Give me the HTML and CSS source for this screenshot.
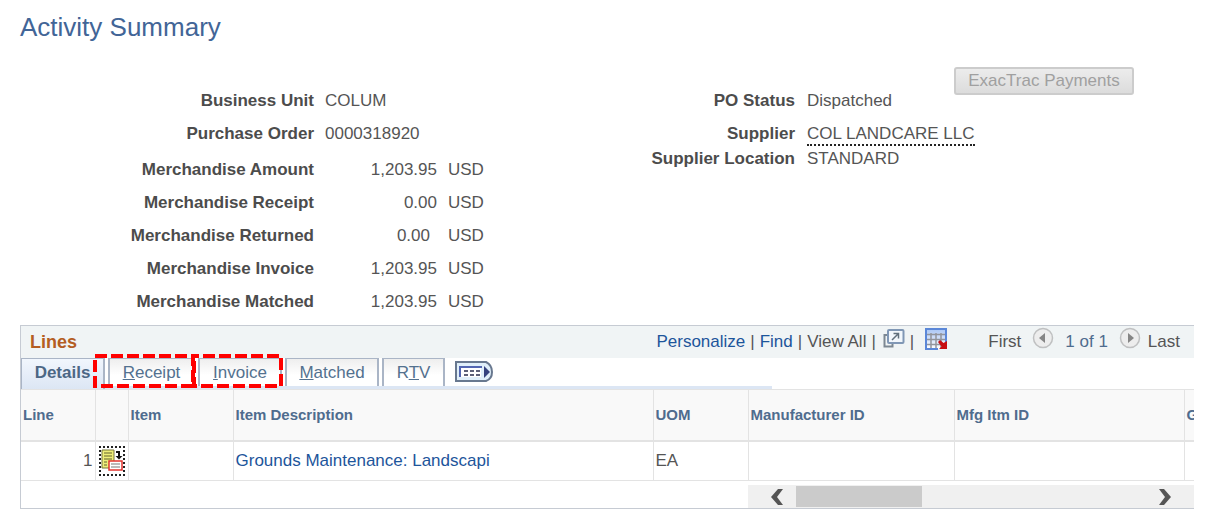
FILE: index.html
```html
<!DOCTYPE html>
<html lang="en-US">
<head>
	<meta charset="UTF-8">
	<meta name="viewport" content="width=device-width, initial-scale=1.0">
	<title>Activity Summary</title>
	<link rel="stylesheet" href="styles.css">
</head>
<body>
	<h1>Activity Summary</h1>

	<div class="summary">
		<dl class="order">
			<dt>Business Unit</dt><dd class="wide">COLUM</dd>
			<dt>Purchase Order</dt><dd class="wide">0000318920</dd>
		</dl>
		<dl class="order amounts">
			<dt>Merchandise Amount</dt><dd class="amount">1,203.95</dd><dd>USD</dd>
			<dt>Merchandise Receipt</dt><dd class="amount">0.00</dd><dd>USD</dd>
			<dt>Merchandise Returned</dt><dd class="amount returned">0.00</dd><dd>USD</dd>
			<dt>Merchandise Invoice</dt><dd class="amount">1,203.95</dd><dd>USD</dd>
			<dt>Merchandise Matched</dt><dd class="amount">1,203.95</dd><dd>USD</dd>
		</dl>
		<div class="supplier">
			<strong class="status">PO Status</strong>
			<div class="status-value">
				<span class="status">Dispatched</span>
				<button type="button" disabled>ExacTrac Payments</button>
			</div>
			<strong>Supplier</strong><span><abbr>COL LANDCARE LLC</abbr></span>
			<strong class="location">Supplier Location</strong><span class="location">STANDARD</span>
		</div>
	</div>

	<section class="lines">
		<header>
			<h2>Lines</h2>
			<div class="tools">
				<a href="#">Personalize</a><span>|</span>
				<a href="#">Find</a><span>|</span>
				<span>View All</span><span>|</span>
				<a href="#" class="popup" aria-label="Open in new window">
					<svg width="22" height="20" viewBox="0 0 22 20">
						<path d="M5 7H1.500V18.500H9.500V15" fill="none" stroke="#7c8792" stroke-width="2"/>
						<rect x="5" y="2" width="15.500" height="13" rx="1" fill="#f2f7fc" stroke="#8097b5" stroke-width="2"/>
						<path d="M9 12l6-6M10.500 5.500h5v5" fill="none" stroke="#61707d" stroke-width="1.500"/>
					</svg>
				</a><span>|</span>
				<a href="#" class="download" aria-label="Download to spreadsheet">
					<svg width="23" height="23" viewBox="0 0 23 23">
						<defs>
							<linearGradient id="sheet" x2="0" y2="1"><stop stop-color="#a9c6f5"/><stop offset="1" stop-color="#fff"/></linearGradient>
						</defs>
						<rect x="1" y="1" width="20" height="20" fill="url(#sheet)"/>
						<path d="M6 5V21M11 5V21M16 5V21M2 6.500H20M2 11.500H20M2 16.500H20" stroke="#92959c" stroke-width="1.500"/>
						<path d="M21 14V1H1V21H13" fill="none" stroke="#5b87d8" stroke-width="2"/>
						<path d="M13 14l2-2 3.500 3 3.500-2v8h-8l2.500-2.500z" fill="#c70d12"/>
					</svg>
				</a>
			</div>
			<div class="pager">
				<span>First</span>
				<button type="button" aria-label="Previous" disabled>
					<svg width="22" height="22" viewBox="0 0 22 22">
						<circle cx="11" cy="11" r="9.500" fill="#ededed" stroke="#bfc0c1" stroke-width="1.500"/>
						<path d="M13 6v10l-6-5z" fill="#858585"/>
					</svg>
				</button>
				<span class="count">1 of 1</span>
				<button type="button" aria-label="Next" disabled>
					<svg width="22" height="22" viewBox="0 0 22 22">
						<circle cx="11" cy="11" r="9.500" fill="#ededed" stroke="#bfc0c1" stroke-width="1.500"/>
						<path d="M9 6v10l6-5z" fill="#858585"/>
					</svg>
				</button>
				<span>Last</span>
			</div>
		</header>

		<nav class="tabs">
			<a href="#" class="details active">Details</a>
			<a href="#" class="receipt"><u>R</u>eceipt</a>
			<a href="#" class="invoice"><u>I</u>nvoice</a>
			<a href="#" class="matched"><u>M</u>atched</a>
			<a href="#" class="rtv">R<u>T</u>V</a>
			<button type="button" aria-label="Show all columns">
				<svg width="38" height="22" viewBox="0 0 38 22">
					<path d="M1 1H31Q37 4 37 11T31 20H1Z" fill="#e0effa" stroke="#68788f" stroke-width="2"/>
					<path d="M5 16V6H26V16" fill="#fff"/>
					<path d="M5 16V6M4 6H27" fill="none" stroke="#5266b2" stroke-width="2"/>
					<path d="M9 10h4m2 0h4m2 0h4M9 14h4m2 0h4m2 0h4" stroke="#5c6078" stroke-width="2"/>
					<path d="M29 5v12l6-6z" fill="#35427e"/>
				</svg>
			</button>
			<!-- callouts round Receipt and Invoice -->
			<svg class="marks" width="266" height="36" viewBox="0 0 266 36">
				<g fill="none" stroke="#f00" stroke-width="4">
					<rect x="74" y="3" width="98" height="30" stroke-dasharray="12 4"/>
					<rect x="173" y="3" width="87" height="30" stroke-dasharray="12 4" stroke-dashoffset="7"/>
				</g>
			</svg>
		</nav>

		<div class="scroller">
			<table>
				<colgroup>
					<col class="c-line"><col class="c-icon"><col class="c-item"><col class="c-desc">
					<col class="c-uom"><col class="c-maker"><col class="c-mfg"><col>
				</colgroup>
				<thead>
					<tr>
						<th>Line</th><th></th><th>Item</th><th>Item Description</th>
						<th>UOM</th><th>Manufacturer ID</th><th>Mfg Itm ID</th><th>G</th>
					</tr>
				</thead>
				<tbody>
					<tr>
						<td class="num">1</td>
						<td class="act">
							<a href="#" aria-label="Line details">
								<svg width="22" height="26" viewBox="0 0 22 26">
									<path d="M1 2h12v18H1z" fill="#eeee79" stroke="#77773c"/>
									<path d="M3 5h8M3 8h8M3 11h8M3 14h3M3 17h3" stroke="#62622f" stroke-width="1.200"/>
									<path d="M15 4h3v5" fill="none" stroke="#111" stroke-width="2"/>
									<path d="M14.500 8h7L18 11.500z" fill="#111"/>
									<rect x="8" y="13" width="13" height="9" fill="#fff" stroke="#e2342f" stroke-width="1.500"/>
									<path d="M10 16h9M10 19h9" stroke="#777" stroke-width="1.200"/>
								</svg>
							</a>
						</td>
						<td></td>
						<td><a href="#">Grounds Maintenance: Landscapi</a></td>
						<td>EA</td><td></td><td></td><td></td>
					</tr>
				</tbody>
			</table>
		</div>

		<div class="scrollbar">
			<button type="button" aria-label="Scroll left"><svg width="14" height="16" viewBox="0 0 14 16"><path d="M13 0H8L1 8l7 8h5L7 8z" fill="#555"/></svg></button>
			<div class="track"><div class="thumb"></div></div>
			<button type="button" aria-label="Scroll right"><svg width="14" height="16" viewBox="0 0 14 16"><path d="M1 0h5l7 8-7 8H1l6-8z" fill="#555"/></svg></button>
		</div>
	</section>
</body>
</html>
```
FILE: styles.css
```css
*{
	box-sizing: border-box;
}

body{
	margin: 0;
	padding: 12px 24px 15px 20px;
	background: #fff;
	color: #555;
	font-family: "Liberation Sans", Arial, sans-serif;
	font-size: 17px;
	line-height: 33px;
}

h1{
	margin: 0 0 25px;
	font-size: 26px;
	font-weight: normal;
	line-height: 30px;
	color: #426597;
}

a{
	color: #1d559b;
	text-decoration: none;
}

button{
	font: inherit;
	padding: 0;
	border: 0;
	background: none;
}

svg{
	display: block;
}

.summary{
	display: grid;
	grid-template-columns: 580px 1fr;
	margin-bottom: 7px;
}

.order{
	display: grid;
	grid-template-columns: 294px 112px 1fr;
	column-gap: 11px;
	margin: 17px 0 0;
}

.amounts{
	grid-row: 2;
	margin-top: 3px;
}

dt, .supplier strong{
	font-weight: bold;
	text-align: right;
	color: #4c4c4c;
}

dd{
	margin: 0;
}

.wide{
	grid-column: 2 / 4;
}

.amount{
	text-align: right;
}

.returned{
	padding-right: 7px;
}

.supplier{
	grid-row: 1 / 3;
	grid-column: 2;
	display: grid;
	grid-template-columns: 195px 1fr;
	grid-template-rows: 50px 33px 17px;
	column-gap: 12px;
}

.status{
	padding-top: 17px;
}

.status-value{
	display: flex;
	justify-content: space-between;
}

.location{
	line-height: 17px;
}

.supplier abbr{
	padding-bottom: 1px;
	border-bottom: 2px dotted #222;
}

.supplier button{
	width: 180px;
	height: 28px;
	margin-right: 60px;
	border: 2px solid #ccc;
	border-radius: 3px;
	background: linear-gradient(#ececec, #dcdcdc);
	color: #a0a0a0;
	line-height: 24px;
}

.lines{
	border: 1px solid #c6cbd3;
	border-right: 0;
}

.lines header{
	display: flex;
	height: 32px;
	padding: 0 14px 0 9px;
	background: #f0f4f5;
	line-height: 32px;
}

h2{
	margin: 0 auto 0 0;
	font-size: 18px;
	color: #b45d22;
}

.tools{
	display: flex;
	gap: 5px;
}

.popup, .download{
	padding-top: 2px;
}

.popup{
	padding-left: 2px;
}

.download{
	padding-left: 6px;
}

.pager{
	display: flex;
	gap: 11px;
	margin-left: 40px;
}

.pager button{
	height: 24px;
}

.pager button + span:last-child{
	margin-left: -4px;
}

.count{
	color: #4f6c8e;
}

.tabs{
	position: relative;
	display: flex;
	gap: 3px;
	height: 31px;
	background: linear-gradient(#dce6f4, #dce6f4) 0 100% / 751px 3px no-repeat;
	line-height: 28px;
}

.tabs a{
	height: 28px;
	border: 1px solid #aab5c6;
	border-width: 1px 2px 0;
	background: linear-gradient(#eee, #fff 60%);
	color: #53718f;
	text-align: center;
}

.tabs .active{
	height: 31px;
	border-left-width: 1px;
	background: linear-gradient(#f1f6fd, #dce6f4);
	color: #4c6785;
	font-weight: bold;
}

.details, .invoice{
	width: 84px;
}

.receipt{
	width: 87px;
}

.matched{
	width: 94px;
}

.rtv{
	width: 63px;
}

.tabs button{
	height: 28px;
	margin-left: 7px;
}

.marks{
	position: absolute;
	top: -5px;
	left: 0;
}

.scroller{
	overflow: hidden;
}

table{
	width: 1400px;
	table-layout: fixed;
	border-collapse: collapse;
	line-height: 20px;
}

.c-line{
	width: 74px;
}

.c-icon{
	width: 33px;
}

.c-item{
	width: 105px;
}

.c-desc{
	width: 420px;
}

.c-uom{
	width: 95px;
}

.c-maker{
	width: 206px;
}

.c-mfg{
	width: 230px;
}

th, td{
	padding: 0 2px;
	border: 1px solid #e3e3e3;
	border-left-width: 0;
	text-align: left;
}

th{
	height: 51px;
	background: #f9f9f9;
	border-bottom-width: 2px;
	color: #4f6c8e;
	font-size: 15px;
}

td{
	height: 40px;
}

td.num{
	text-align: right;
}

.act a{
	display: block;
	width: 26px;
	margin: 0 auto;
	border: 2px dotted #222;
}

.scrollbar{
	display: flex;
	align-items: center;
	height: 23px;
	margin: 4px 0 0 727px;
	padding: 0 22px;
	background: #f0f0f0;
}

.track{
	flex: 1;
	margin: 0 12px;
}

.thumb{
	width: 126px;
	height: 21px;
	background: #cbcbcb;
}
```
